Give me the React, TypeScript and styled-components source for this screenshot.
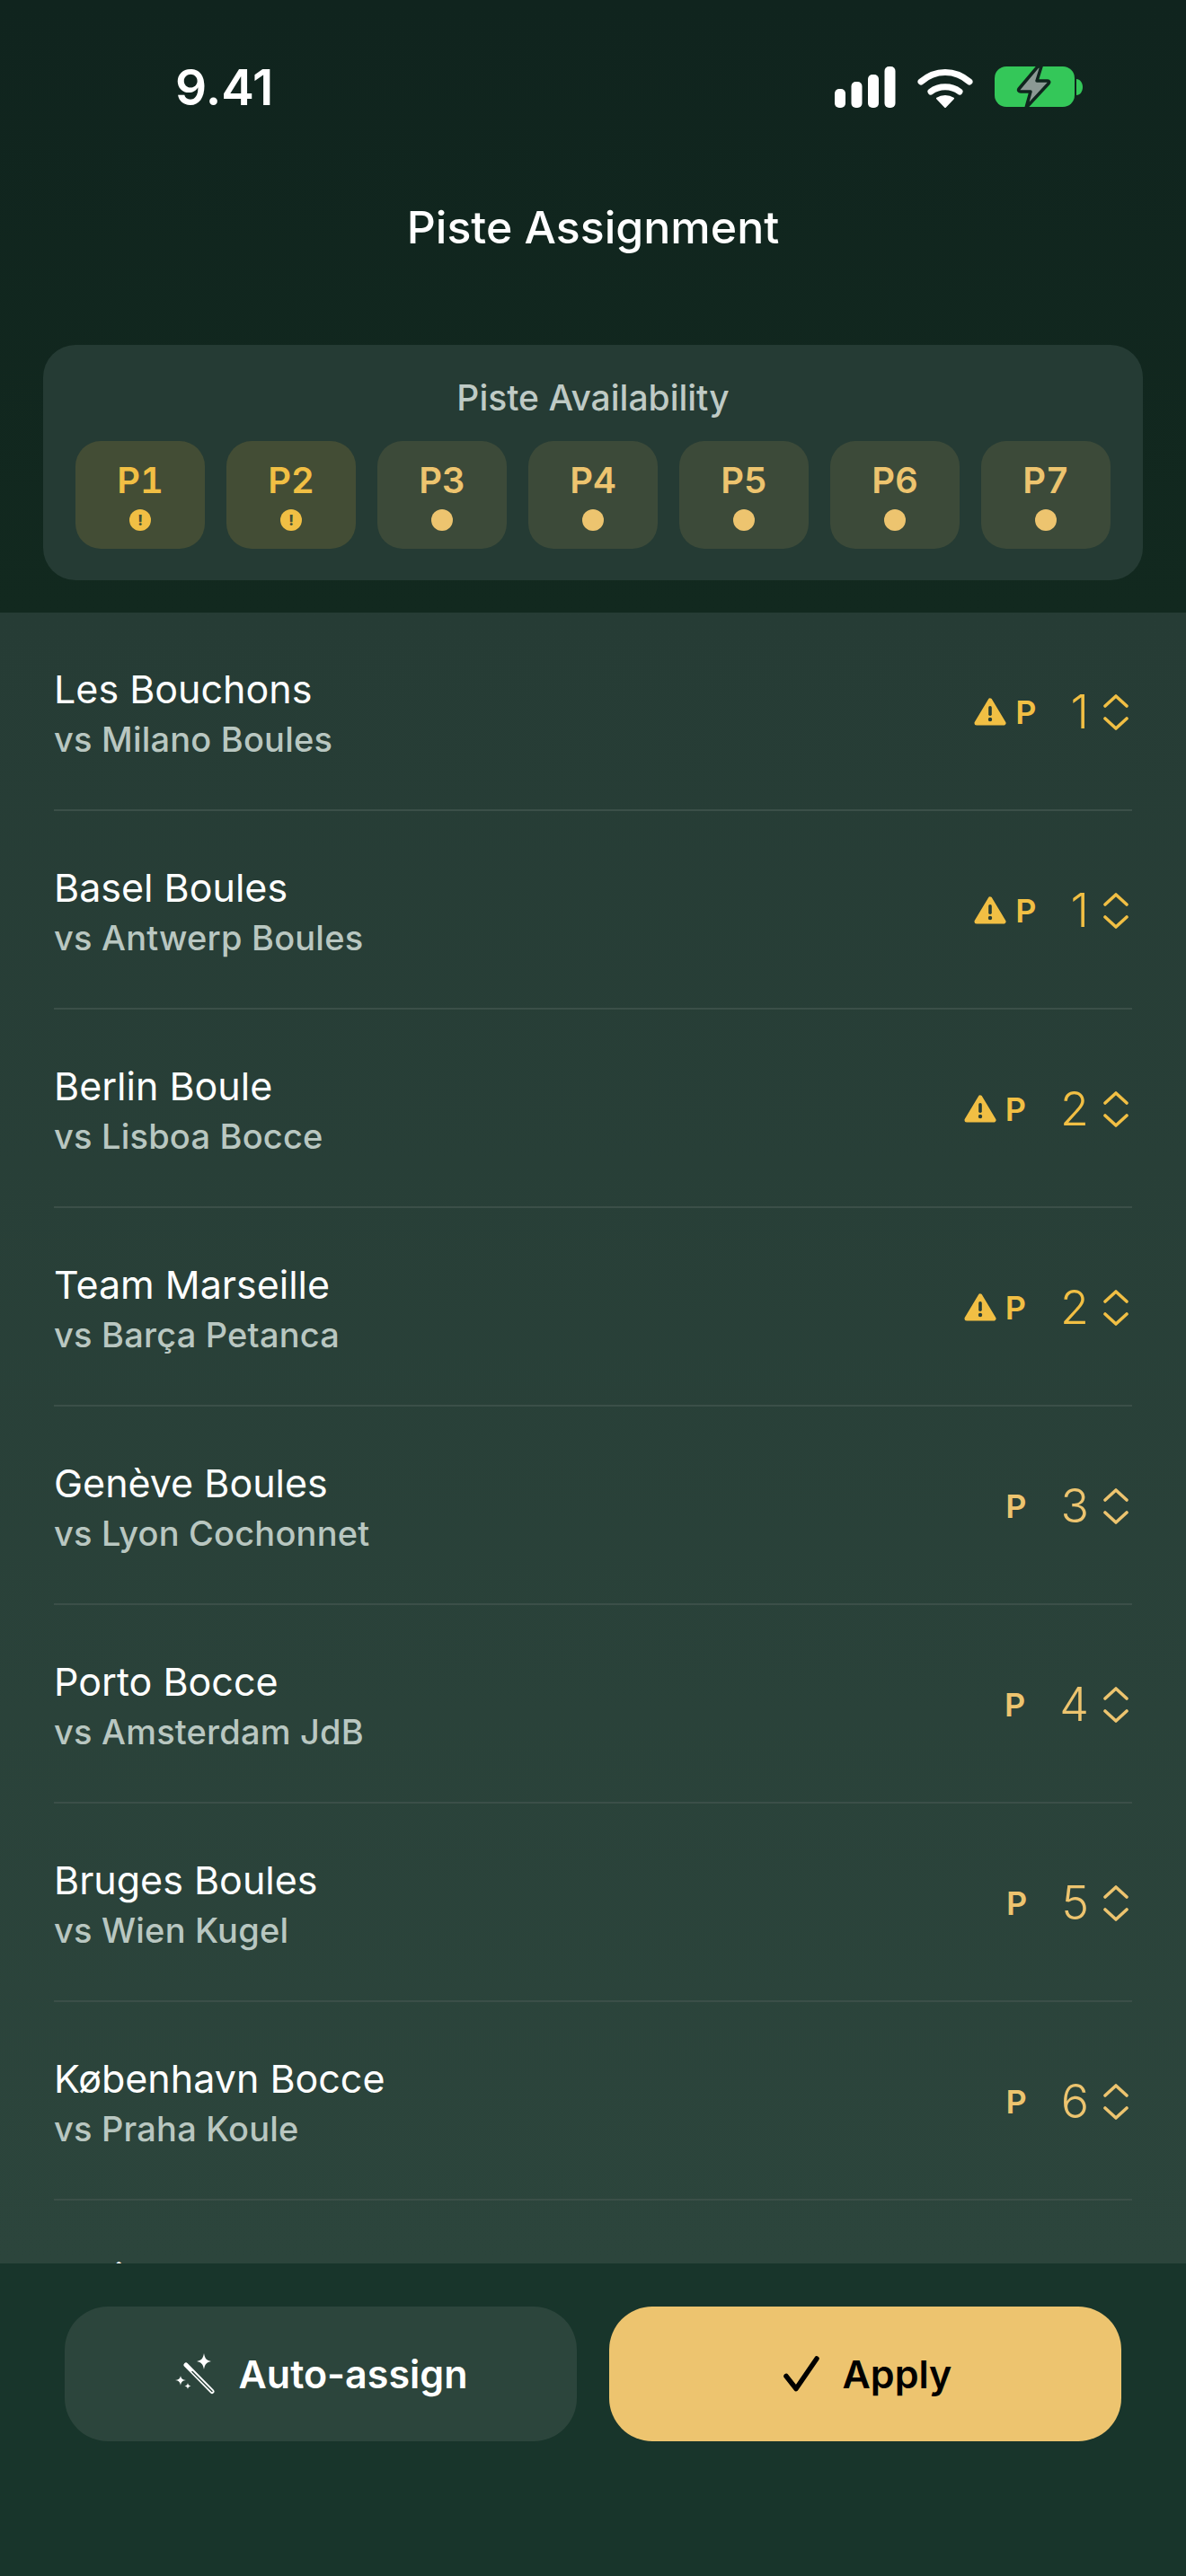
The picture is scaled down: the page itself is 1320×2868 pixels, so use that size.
import React from "react";
import styled, { createGlobalStyle } from "styled-components";

const GlobalStyle = createGlobalStyle`
  html, body {
    margin: 0;
    padding: 0;
    background: #10251e;
  }
  * {
    box-sizing: border-box;
  }
`;

const Screen = styled.div`
  width: 1320px;
  height: 2868px;
  display: flex;
  flex-direction: column;
  overflow: hidden;
  font-family: Inter, "Liberation Sans", sans-serif;
  background: #11271f;
`;

const Header = styled.div`
  height: 682px;
  flex: none;
  padding: 0 48px;
  background: linear-gradient(180deg, #10241e 0%, #12291f 100%);
`;

const StatusBar = styled.div`
  height: 190px;
  display: flex;
  justify-content: space-between;
  align-items: flex-start;
  padding: 65px 67px 0 147px;
`;

const Time = styled.div`
  font-size: 55px;
  line-height: 65px;
  font-weight: 600;
  color: #fff;
`;

const StatusIcons = styled.div`
  display: flex;
  align-items: center;
  gap: 24px;
  padding-top: 8px;
`;

const Title = styled.h1`
  margin: 34px 0 102px;
  text-align: center;
  font-size: 50px;
  line-height: 58px;
  font-weight: 500;
  color: #fff;
`;

const AvailabilityCard = styled.div`
  height: 262px;
  padding: 39px 36px 0;
  border-radius: 36px;
  background: #253b34;
`;

const CardTitle = styled.div`
  text-align: center;
  font-size: 39px;
  line-height: 40px;
  font-weight: 500;
  color: #bfcac5;
  margin-bottom: 28px;
`;

const ChipRow = styled.div`
  display: flex;
  gap: 24px;
`;

const Chip = styled.div<{ $busy: boolean }>`
  width: 144px;
  height: 120px;
  border-radius: 28px;
  display: flex;
  flex-direction: column;
  align-items: center;
  padding-top: 21px;
  background: ${(p) => (p.$busy ? "#434d35" : "#3c4a39")};
  color: ${(p) => (p.$busy ? "#f1bf44" : "#edc46f")};
`;

const ChipLabel = styled.div`
  font-size: 40px;
  line-height: 46px;
  font-weight: 600;
  font-variant-numeric: tabular-nums;
`;

const ChipDot = styled.div<{ $busy: boolean }>`
  width: 24px;
  height: 24px;
  margin-top: 9px;
  border-radius: 50%;
  display: flex;
  align-items: center;
  justify-content: center;
  font-size: 16px;
  line-height: 24px;
  font-weight: 800;
  color: #434d35;
  background: ${(p) => (p.$busy ? "#f1bf44" : "#edc46f")};
`;

const MatchList = styled.div`
  flex: 1;
  min-height: 0;
  overflow: hidden;
  padding: 0 60px;
  background: linear-gradient(180deg, #263c35 0%, #2c453c 100%);
`;

const MatchRow = styled.div`
  height: 221px;
  display: flex;
  align-items: flex-start;
  justify-content: space-between;
  border-bottom: 2px solid #3b4f48;
`;

const Teams = styled.div`
  padding-top: 60px;
`;

const TeamName = styled.div`
  font-size: 43px;
  line-height: 50px;
  font-weight: 400;
  color: #fff;
`;

const Opponent = styled.div`
  font-size: 38px;
  line-height: 44px;
  margin-top: 9px;
  font-weight: 500;
  letter-spacing: 0.2px;
  color: #b9c7c1;
`;

const Assign = styled.div<{ $warn: boolean }>`
  display: flex;
  align-items: center;
  margin-top: 81px;
  margin-right: 4px;
  color: ${(p) => (p.$warn ? "#f1bf44" : "#edc46f")};
`;

const WarnIcon = styled.svg`
  width: 36px;
  height: 32px;
  margin-right: 10px;
`;

const PisteLetter = styled.div`
  font-size: 36px;
  line-height: 40px;
  font-weight: 600;
`;

const PisteNumber = styled.div`
  margin-left: 38px;
  font-size: 52px;
  line-height: 60px;
  font-weight: 350;
`;

const Stepper = styled.svg`
  width: 28px;
  height: 40px;
  margin-left: 16px;
`;

const Footer = styled.div`
  height: 348px;
  flex: none;
  display: flex;
  gap: 36px;
  padding: 48px 72px 0;
  background: #18352b;
`;

const ActionButton = styled.button<{ $primary?: boolean }>`
  flex: 1 1 0;
  height: 150px;
  padding: 0;
  border: none;
  border-radius: 48px;
  display: flex;
  align-items: center;
  justify-content: center;
  gap: 26px;
  font-family: inherit;
  font-size: 43px;
  font-weight: 600;
  background: ${(p) => (p.$primary ? "#edc46f" : "#2c453c")};
  color: ${(p) => (p.$primary ? "#000" : "#fff")};
`;

const Check = styled.svg`
  width: 40px;
  height: 40px;
  margin-left: 5px;
`;

const matches = [
  { team: "Les Bouchons", against: "vs Milano Boules", piste: 1, warn: true },
  { team: "Basel Boules", against: "vs Antwerp Boules", piste: 1, warn: true },
  { team: "Berlin Boule", against: "vs Lisboa Bocce", piste: 2, warn: true },
  { team: "Team Marseille", against: "vs Barça Petanca", piste: 2, warn: true },
  { team: "Genève Boules", against: "vs Lyon Cochonnet", piste: 3, warn: false },
  { team: "Porto Bocce", against: "vs Amsterdam JdB", piste: 4, warn: false },
  { team: "Bruges Boules", against: "vs Wien Kugel", piste: 5, warn: false },
  { team: "København Bocce", against: "vs Praha Koule", piste: 6, warn: false },
  { team: "Torino Bocce", against: "vs Nice Pétanque", piste: 7, warn: false },
];

const pistes = [1, 2, 3, 4, 5, 6, 7];

const SignalIcon = () => (
  <svg width="68" height="46" viewBox="0 0 68 46" fill="#fff">
    <rect x="0" y="25" width="12" height="21" rx="5" />
    <rect x="18.5" y="17" width="12" height="29" rx="5" />
    <rect x="37" y="9" width="12" height="37" rx="5" />
    <rect x="55.5" y="0" width="12" height="46" rx="5" />
  </svg>
);

const WifiIcon = () => (
  <svg width="62" height="46" viewBox="0 0 62 46" fill="none">
    <path d="M4 17C20 3 42 3 58 17" stroke="#fff" strokeWidth="7" strokeLinecap="round" />
    <path d="M15 28C24 21 38 21 47 28" stroke="#fff" strokeWidth="7" strokeLinecap="round" />
    <path d="M22 35.5C27 32 35 32 40 35.5L31 45Z" fill="#fff" stroke="#fff" strokeWidth="2" strokeLinejoin="round" />
  </svg>
);

const BatteryIcon = () => (
  <svg width="98" height="48" viewBox="0 0 98 48" fill="none">
    <rect x="0" y="1" width="89" height="45" rx="13" fill="#34c759" />
    <path d="M91 15C95 15 98 19 98 24C98 29 95 33 91 33Z" fill="#34c759" />
    <path
      d="M48 1L27 26C26 27.5 27 29 29 29H40L35 47L60 20C61.5 18.5 60.5 17 59 17H47L52 1Z"
      fill="#8b9994"
      stroke="#10251e"
      strokeWidth="3.5"
      strokeLinejoin="round"
    />
  </svg>
);

const WandIcon = () => (
  <svg width="46" height="46" viewBox="0 0 46 46" fill="none">
    <path d="M33 0C34 6 36 8 41 9C36 10 34 12 33 18C32 12 30 10 25 9C30 8 32 6 33 0Z" fill="#fff" />
    <path d="M7 25C7.5 28 9 29.5 13 30C9 30.5 7.5 32 7 36C6.5 32 5 30.5 1 30C5 29.5 6.5 28 7 25Z" fill="#fff" />
    <path d="M15 33C15.3 35 16 36 18.5 36.5C16 37 15.3 38 15 40C14.7 38 14 37 11.5 36.5C14 36 14.7 35 15 33Z" fill="#fff" />
    <path d="M13 13L42 42.5" stroke="#fff" strokeWidth="5" strokeLinecap="round" />
    <path d="M20 20.5L42 42.5" stroke="#2c453c" strokeWidth="1.5" strokeLinecap="round" />
  </svg>
);

const CheckIcon = () => (
  <Check viewBox="0 0 40 40" fill="none">
    <path d="M3 22.5L14 36.5L37 3" stroke="#000" strokeWidth="5.5" strokeLinecap="round" strokeLinejoin="round" />
  </Check>
);

const App = () => {
  return (
    <>
      <GlobalStyle />
      <Screen>
        <Header>
          <StatusBar>
            <Time>9.41</Time>
            <StatusIcons>
              <SignalIcon />
              <WifiIcon />
              <BatteryIcon />
            </StatusIcons>
          </StatusBar>
          <Title>Piste Assignment</Title>
          <AvailabilityCard>
            <CardTitle>Piste Availability</CardTitle>
            <ChipRow>
              {pistes.map((piste) => (
                <Chip key={piste} $busy={piste < 3}>
                  <ChipLabel>P{piste}</ChipLabel>
                  <ChipDot $busy={piste < 3}>{piste < 3 ? "!" : ""}</ChipDot>
                </Chip>
              ))}
            </ChipRow>
          </AvailabilityCard>
        </Header>
        <MatchList>
          {matches.map((match) => (
            <MatchRow key={match.team}>
              <Teams>
                <TeamName>{match.team}</TeamName>
                <Opponent>{match.against}</Opponent>
              </Teams>
              <Assign $warn={match.warn}>
                {match.warn && (
                  <WarnIcon viewBox="0 0 36 32">
                    <path
                      d="M18 3L33 28H3Z"
                      fill="currentColor"
                      stroke="currentColor"
                      strokeWidth="5"
                      strokeLinejoin="round"
                    />
                    <rect x="16.2" y="9" width="3.6" height="11" rx="1.8" fill="#263c35" />
                    <circle cx="18" cy="24" r="2.2" fill="#263c35" />
                  </WarnIcon>
                )}
                <PisteLetter>P</PisteLetter>
                <PisteNumber>{match.piste}</PisteNumber>
                <Stepper viewBox="0 0 28 40" fill="none">
                  <path d="M2 13L14 2L26 13" stroke="currentColor" strokeWidth="3.6" strokeLinecap="round" strokeLinejoin="round" />
                  <path d="M2 27L14 38L26 27" stroke="currentColor" strokeWidth="3.6" strokeLinecap="round" strokeLinejoin="round" />
                </Stepper>
              </Assign>
            </MatchRow>
          ))}
        </MatchList>
        <Footer>
          <ActionButton>
            <WandIcon />
            Auto-assign
          </ActionButton>
          <ActionButton $primary>
            <CheckIcon />
            Apply
          </ActionButton>
        </Footer>
      </Screen>
    </>
  );
};

export default App;
